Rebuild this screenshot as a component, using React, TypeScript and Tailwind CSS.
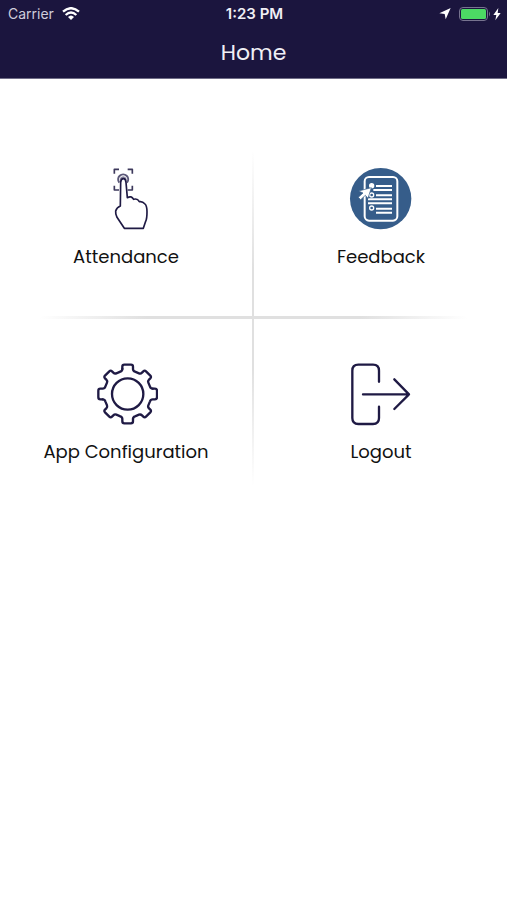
import type { ReactNode } from "react";

const INK = "#1f1a44";

function WifiIcon() {
  return (
    <svg width="18" height="14" viewBox="0 0 54 42" fill="none" stroke="#fff" strokeWidth="7" aria-hidden="true">
      <path d="M3 14Q27-7 51 14" />
      <path d="M11 24Q27 9 43 24" />
      <path d="M18 30Q27 21 36 30L27 39Z" fill="#fff" stroke="none" />
    </svg>
  );
}

function LocationIcon() {
  return (
    <svg width="12" height="12" viewBox="0 0 36 36" fill="#fff" aria-hidden="true">
      <path d="M35 0L20 34L17 18L1 16Z" />
    </svg>
  );
}

function BatteryIcon() {
  return (
    <svg width="32" height="14" viewBox="0 0 32 14" aria-hidden="true">
      <rect x="0.5" y="0.5" width="28" height="13" rx="3.5" fill="none" stroke="#77738f" />
      <rect x="2" y="2" width="25" height="10" rx="1.5" fill="#4cd964" />
      <path d="M30 4.5Q32 7 30 9.5Z" fill="#77738f" />
    </svg>
  );
}

function BoltIcon() {
  return (
    <svg width="8" height="13" viewBox="0 0 24 39" fill="#fff" aria-hidden="true">
      <path d="M16 0L1 21H10L7 37L23 15H14Z" />
    </svg>
  );
}

function TouchIcon() {
  return (
    <svg width="64" height="64" viewBox="12 36 192 192" fill="none" stroke={INK} strokeWidth="5" strokeLinejoin="round" aria-hidden="true">
      <path d="M73 56V43H87M113 43H127V56M73 92V105H87M113 105H127V92" stroke="#3d395c" />
      <path d="M88 83A15 15 0 1 1 111 83" strokeWidth="6" stroke="#5b5878" />
      <path d="M92 77A8 8 0 1 1 107 77" stroke="#8e8ba3" />
      <path
        d="M91 153L92 82Q93 71 100 71Q107 71 108 82L112 128Q124 121 131 133Q142 129 148 140Q157 138 165 147Q171 153 171 170Q171 191 167 199L160 220H103L81 187Q76 177 77 168Q80 158 91 153Z"
        fill="#fff"
      />
    </svg>
  );
}

function FeedbackIcon() {
  return (
    <svg width="64" height="64" viewBox="27 36 192 192" fill="none" stroke="#fff" aria-hidden="true">
      <circle cx="122" cy="131" r="92" fill="#365d8a" stroke="none" />
      <rect x="74" y="66" width="98" height="131" rx="13" strokeWidth="6" />
      <path d="M108 93H156M100 105H156M108 121H156M84 133H156M84 145H156M108 161H156M108 173H156" strokeWidth="6" />
      <g strokeWidth="4">
        <circle cx="95" cy="92" r="6" fill="#fff" />
        <circle cx="95" cy="120" r="6" />
        <circle cx="95" cy="159" r="6" />
      </g>
      <path d="M94 98L84 130L76 121L62 134L55 127L69 114L56 108Z" fill="#fff" stroke="#365d8a" strokeWidth="2" />
    </svg>
  );
}

const GEAR_QUARTER =
  "M-16-75V-82Q-16-88-10-88H10Q16-88 16-82V-75Q16-69 22-67L34-62Q39-60 43-64L47-68Q51-72 55-68L68-55Q72-51 68-47L64-43Q60-39 62-34L67-22Q69-16 75-16";

function GearIcon() {
  return (
    <svg width="64" height="64" viewBox="-101 -96 192 192" fill="none" stroke={INK} strokeWidth="7" strokeLinecap="round" aria-hidden="true">
      <path d={GEAR_QUARTER} />
      <path d={GEAR_QUARTER} transform="rotate(90)" />
      <path d={GEAR_QUARTER} transform="rotate(180)" />
      <path d={GEAR_QUARTER} transform="rotate(270)" />
      <circle r="47" />
    </svg>
  );
}

function LogoutIcon() {
  return (
    <svg width="64" height="64" viewBox="27 21 192 192" fill="none" stroke={INK} strokeWidth="7" strokeLinecap="round" strokeLinejoin="round" aria-hidden="true">
      <path d="M117 80V47Q117 29 99 29H55Q37 29 37 47V189Q37 207 55 207H99Q117 207 117 189V155" />
      <path d="M69 118H207M163 73L207 118L163 162" />
    </svg>
  );
}

function Tile({ label, icon, place }: { label: string; icon: ReactNode; place: string }) {
  return (
    <button type="button" className={`flex flex-col items-center gap-3 text-lg leading-7 text-[#111] ${place}`}>
      {icon}
      <span>{label}</span>
    </button>
  );
}

export default function App() {
  return (
    <div className="min-h-screen bg-white font-[Poppins,Inter,sans-serif]">
      <header className="border-b border-[#6f6c86] bg-[#1b153e] text-[#f0eff5]">
        <div className="grid h-7 grid-cols-[1fr_auto_1fr] items-center pr-1.5 pl-2 font-[Inter,sans-serif] text-sm">
          <div className="flex items-center gap-2">
            <span className="text-[#cfcddb]">Carrier</span>
            <WifiIcon />
          </div>
          <time className="text-[15px] font-semibold">1:23 PM</time>
          <div className="flex items-center justify-end gap-0.5">
            <LocationIcon />
            <span className="w-1" />
            <BatteryIcon />
            <BoltIcon />
          </div>
        </div>
        <h1 className="h-[50px] text-center text-[22px] leading-[50px]">Home</h1>
      </header>

      <main className="grid grid-cols-[1fr_3px_1fr] pt-[71px]">
        <Tile label="Attendance" icon={<TouchIcon />} place="col-start-1 row-start-1 pt-[17px] pb-[45px]" />
        <Tile label="Feedback" icon={<FeedbackIcon />} place="col-start-3 row-start-1 pt-[17px] pb-[45px]" />
        <div className="col-start-2 row-span-3 row-start-1 w-[2px] bg-[linear-gradient(to_bottom,transparent,#e0e0e0_35%,#e0e0e0_65%,transparent)]" />
        <div className="col-span-3 col-start-1 row-start-2 mx-10 h-[3px] bg-[linear-gradient(to_right,transparent,#e0e0e0_25%,#e0e0e0_75%,transparent)]" />
        <Tile label="App Configuration" icon={<GearIcon />} place="col-start-1 row-start-3 pt-[43px] pb-5" />
        <Tile label="Logout" icon={<LogoutIcon />} place="col-start-3 row-start-3 pt-[43px] pb-5" />
      </main>
    </div>
  );
}
